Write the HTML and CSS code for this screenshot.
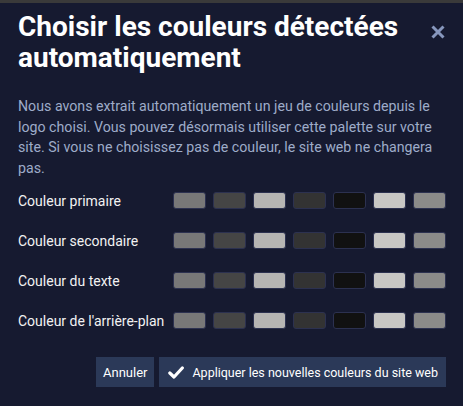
FILE: index.html
```html
<!DOCTYPE html>
<html lang="fr">
<head>
<meta charset="utf-8">
<link rel="stylesheet" href="styles.css">
</head>
<body>
<div class="topstrip"></div>
<div class="modal">
  <div class="header">
    <h1 class="title">Choisir les couleurs détectées automatiquement</h1>
    <button class="close" aria-label="Fermer">
      <svg width="14" height="14" viewBox="0 0 14 14"><path d="M1.5 1.5 L12.5 12.5 M12.5 1.5 L1.5 12.5" stroke="#8797bd" stroke-width="3" stroke-linecap="butt"/></svg>
    </button>
  </div>
  <p class="desc">Nous avons extrait automatiquement un jeu de couleurs depuis le logo choisi. Vous pouvez désormais utiliser cette palette sur votre site. Si vous ne choisissez pas de couleur, le site web ne changera pas.</p>
  <div class="rows">
    <div class="row"><span class="label">Couleur primaire</span><div class="swatches"><span class="sw c1"></span><span class="sw c2"></span><span class="sw c3"></span><span class="sw c4"></span><span class="sw c5"></span><span class="sw c6"></span><span class="sw c7"></span></div></div>
    <div class="row"><span class="label">Couleur secondaire</span><div class="swatches"><span class="sw c1"></span><span class="sw c2"></span><span class="sw c3"></span><span class="sw c4"></span><span class="sw c5"></span><span class="sw c6"></span><span class="sw c7"></span></div></div>
    <div class="row"><span class="label">Couleur du texte</span><div class="swatches"><span class="sw c1"></span><span class="sw c2"></span><span class="sw c3"></span><span class="sw c4"></span><span class="sw c5"></span><span class="sw c6"></span><span class="sw c7"></span></div></div>
    <div class="row"><span class="label">Couleur de l'arrière-plan</span><div class="swatches"><span class="sw c1"></span><span class="sw c2"></span><span class="sw c3"></span><span class="sw c4"></span><span class="sw c5"></span><span class="sw c6"></span><span class="sw c7"></span></div></div>
  </div>
  <div class="actions">
    <button class="btn">Annuler</button>
    <button class="btn btn-apply">
      <svg width="16" height="13" viewBox="0 0 16 13"><path d="M1.8 7 L6 11 L14.3 2" fill="none" stroke="#ffffff" stroke-width="3.2" stroke-linecap="round" stroke-linejoin="round"/></svg>
      <span>Appliquer les nouvelles couleurs du site web</span>
    </button>
  </div>
</div>
</body>
</html>
```
FILE: styles.css
```css
html, body {
  margin: 0;
  padding: 0;
  background: #161a30;
}
body {
  width: 463px;
  height: 406px;
  overflow: hidden;
  font-family: Roboto, "Liberation Sans", sans-serif;
}
.topstrip {
  height: 3px;
  background: #3a3a3a;
}
.modal {
  padding: 8px 17px 0 18px;
}
.header {
  display: flex;
  justify-content: space-between;
  align-items: flex-start;
}
.title {
  margin: 0;
  color: #ffffff;
  font-size: 28px;
  line-height: 31px;
  font-weight: 700;
  width: 405px;
}
.close {
  background: none;
  border: 0;
  padding: 0;
  margin: 14px 1px 0 0;
  width: 14px;
  height: 14px;
  display: flex;
}
.desc {
  margin: 23px 0 0;
  color: #9eacc9;
  font-size: 14.2px;
  line-height: 20.5px;
}
.rows {
  margin-top: 14px;
  display: flex;
  flex-direction: column;
  gap: 23px;
}
.row {
  display: flex;
  justify-content: space-between;
  align-items: center;
  height: 17px;
}
.label {
  color: #f2f2f2;
  font-size: 14px;
}
.swatches {
  display: flex;
  gap: 7px;
}
.sw {
  width: 31px;
  height: 15px;
  border: 1px solid #2c3150;
  border-radius: 3px;
}
.c1 { background: #787878; }
.c2 { background: #454545; }
.c3 { background: #b6b5b3; }
.c4 { background: #333333; }
.c5 { background: #111111; }
.c6 { background: #c8c7c4; }
.c7 { background: #8b8b89; }
.actions {
  margin-top: 28px;
  display: flex;
  justify-content: flex-end;
  gap: 5px;
}
.btn {
  height: 30px;
  background: #2b3958;
  color: #ffffff;
  border: 0;
  border-radius: 0;
  font-family: Roboto, "Liberation Sans", sans-serif;
  font-size: 13px;
  padding: 0 7px;
  display: flex;
  align-items: center;
  gap: 8px;
}
.btn-apply {
  padding: 0 8px 0 9px;
  font-size: 12.5px;
}
```
